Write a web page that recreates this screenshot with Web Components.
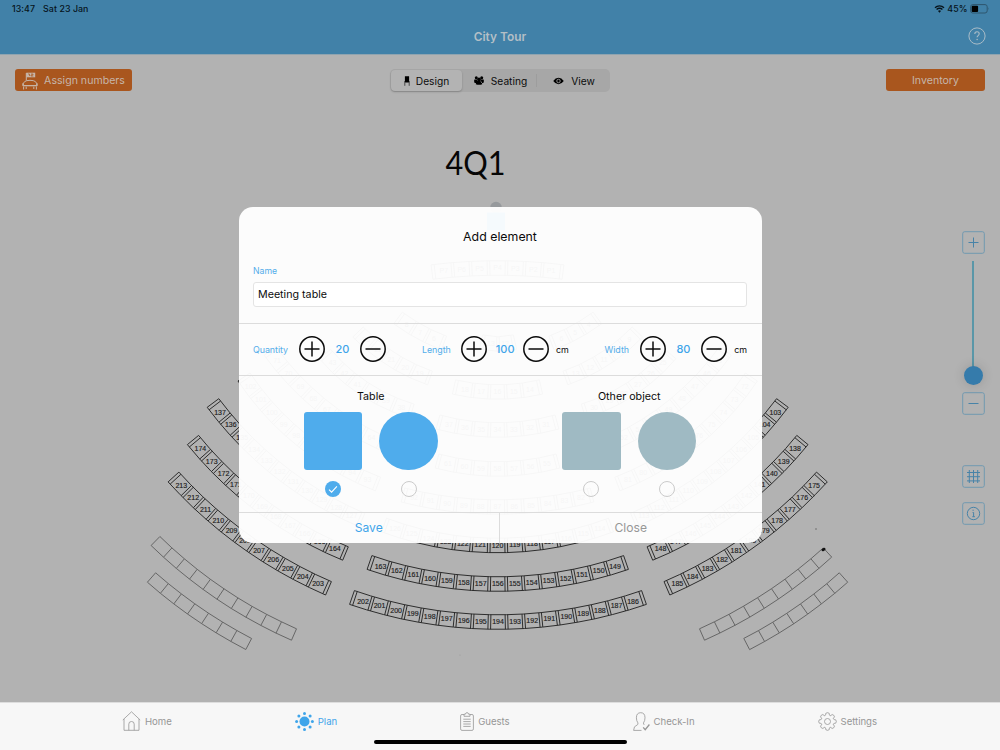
<!DOCTYPE html>
<html lang="en">
<head>
<meta charset="utf-8">
<title>City Tour</title>
<style>
    html, body { margin: 0; height: 100%; overflow: hidden; }
    body { font-family: Inter, "Liberation Sans", sans-serif; background: #b2b2b2; color: #0b0b0b; }
</style>
</head>
<body>
<tour-app></tour-app>

<script>
// Small helper: every element gets an open shadow root with its own styles
class BaseElement extends HTMLElement {
    constructor() {
        super();
        this.attachShadow({ mode: 'open' });
    }
    connectedCallback() {
        this.shadowRoot.innerHTML = this.render();
    }
}

// 1. Header with the status line
class AppHeader extends BaseElement {
    render() {
        return `
            <style>
                :host { display: block; height: 54.5px; background: #4181a8; border-bottom: 1px solid #8fa4b0; box-sizing: border-box; }
                .status { display: flex; justify-content: space-between; height: 17px; align-items: center; padding: 0 11px 0 12px; font-size: 8.8px; font-weight: 500; color: #06131b; letter-spacing: .08px; }
                .left, .right { display: flex; align-items: center; }
                .left { gap: 8px; }
                .right { gap: 2.5px; }
                .bar { display: grid; grid-template-columns: 1fr auto 1fr; align-items: center; height: 38px; padding: 0 14.5px; }
                h1 { margin: 0; font-size: 11.9px; font-weight: 600; color: #b3bfc6; grid-column: 2; }
                .help { justify-self: end; display: block; }
            </style>
            <div class="status">
                <div class="left"><span>13:47</span><span>Sat 23 Jan</span></div>
                <div class="right">
                    <svg width="11" height="8" viewBox="0 0 10 8" fill="none" stroke="#06131b" stroke-width="1.4">
                        <path d="M.5 2.7a6.4 6.4 0 0 1 9 0M2.1 4.5a4.1 4.1 0 0 1 5.8 0"/>
                        <path d="M5 7.7 3.5 6.1a2.1 2.1 0 0 1 3 0z" fill="#06131b" stroke="none"/>
                    </svg>
                    <span>45%</span>
                    <svg width="19" height="10" viewBox="0 0 19 10">
                        <rect x=".6" y=".6" width="16.6" height="8.4" rx="2.2" fill="none" stroke="#2e566e"/>
                        <rect x="1.7" y="1.7" width="6.4" height="6.2" rx="1" fill="#000"/>
                        <path d="M18 3.3q1 1.4 0 2.8z" fill="#2e566e"/>
                    </svg>
                </div>
            </div>
            <div class="bar">
                <h1>City Tour</h1>
                <svg class="help" width="18" height="18" viewBox="0 0 18 18" fill="none" stroke="#a9bcc7">
                    <circle cx="9" cy="9" r="8.1"/>
                    <path d="M6.8 7.1c0-1.5 1-2.3 2.2-2.3s2.2.8 2.2 2c0 1.7-2.1 1.8-2.1 3.5" stroke-width="1.1"/>
                    <circle cx="9.1" cy="12.5" r=".75" fill="#a9bcc7" stroke="none"/>
                </svg>
            </div>
        `;
    }
}
customElements.define('app-header', AppHeader);

// 2. Orange button
class ActionButton extends BaseElement {
    render() {
        return `
            <style>
                :host { display: block; }
                button { display: flex; align-items: center; justify-content: center; gap: 6px; width: 100%; height: 22px; padding: 1px 7px 0; border: 0; border-radius: 3px; background: #a9561e; color: #c6b5a9; font: 400 10.6px Inter, sans-serif; white-space: nowrap; }
                ::slotted(svg) { flex: none; display: block; }
            </style>
            <button><slot name="icon"></slot><span><slot></slot></span></button>
        `;
    }
}
customElements.define('action-button', ActionButton);

// 3. Segmented control
class SegmentControl extends BaseElement {
    render() {
        return `
            <style>
                :host { display: grid; grid-template-columns: 72px 75px 73px; width: 220px; height: 23px; border-radius: 5px; background: #a7a7a7; font-size: 10.2px; color: #0b0b0b; }
                div { display: flex; align-items: center; justify-content: center; gap: 7px; }
                .active { margin: 1px 0 1px 1px; background: #b3b3b3; border-radius: 4px; box-shadow: 0 1px 2px rgba(0,0,0,.22); gap: 6px; }
                .mid { border-right: 1px solid #9d9d9d; height: 13px; align-self: center; padding-left: 3px; }
                .last { padding-left: 1px; }
            </style>
            <div class="active">
                <svg width="6" height="10" viewBox="0 0 6 10"><path d="M.9.3h4.200v4.900h.5v1.300H.4V5.200h.5z"/><path d="M.8 6.500v3.300M5.200 6.500v3.300" stroke="#000" stroke-width=".6"/></svg>
                <span>Design</span>
            </div>
            <div class="mid">
                <svg width="10" height="9" viewBox="0 0 10 9">
                    <circle cx="2.300" cy="1.800" r="1.500"/><circle cx="7.700" cy="1.800" r="1.500"/>
                    <circle cx="5" cy="3.500" r="1.900"/>
                    <path d="M.4 3.600 3 3.400l.6 2.200L2.400 6.900H.7Q-.3 5.200.4 3.600zM9.600 3.600 7 3.400l-.6 2.200 1.200 1.300h1.700q1-1.700.3-3.300zM1.800 8.300q-.1-2.600 1.700-3.200h3q1.800.6 1.700 3.200Q5 9.300 1.800 8.300z"/>
                </svg>
                <span>Seating</span>
            </div>
            <div class="last">
                <svg width="11" height="8" viewBox="0 0 12 8"><path d="M.3 4Q2.600.5 6 .5T11.700 4Q9.400 7.500 6 7.500T.3 4z"/><circle cx="6" cy="4" r="1.900" fill="none" stroke="#aaa" stroke-width=".9"/></svg>
                <span>View</span>
            </div>
        `;
    }
}
customElements.define('segment-control', SegmentControl);

// 4. Seating plan: rows are arcs through three points, split into seats
const AXIS = 497.7;

const seatRows = [
    // left wing, mirrored to the right; `right` is the label at its outer end
    { pts: [[173.5, 477], [243, 539.5], [328.5, 588.3]], n: 11, from: 213, right: 175 },
    { pts: [[193, 440], [261, 505.5], [345.5, 553.5]], n: 11, from: 174, right: 138 },
    { pts: [[213, 403], [278, 470], [362, 520]], n: 11, from: 137, right: 103 },
    { pts: [[244, 377], [301, 439.5], [378, 484]], n: 10, from: 102, right: 72 },
    { pts: [[270, 351], [319, 403.5], [382, 443]], n: 8, from: 71, right: 45 },
    { pts: [[325, 354], [363, 388], [412, 411]], n: 6, from: 43, right: 25 },
    { pts: [[358, 332], [391, 359], [430, 378]], n: 5, from: 23, right: 9 },
    { pts: [[398, 318], [420, 332], [444, 343]], n: 3, from: 8, right: 4 },
    // centre block
    { pts: [[432, 272], [AXIS, 268], [563, 272]], n: 7, from: 7, prefix: 'P' },
    { pts: [[481, 342], [AXIS, 344], [515, 342]], n: 2, from: 13 },
    { pts: [[454, 387], [AXIS, 392], [541, 387]], n: 5, from: 18 },
    { pts: [[438, 422], [AXIS, 430], [557, 422]], n: 7, from: 37 },
    { pts: [[437, 461], [AXIS, 469], [558, 461]], n: 7, from: 61 },
    { pts: [[403, 495], [AXIS, 507], [592, 495]], n: 11, from: 92 },
    { pts: [[384, 525], [AXIS, 545.5], [611, 525]], n: 13, from: 126 },
    { pts: [[369.5, 562.5], [AXIS, 584], [626, 562.5]], n: 15, from: 163 },
    { pts: [[352, 597.5], [AXIS, 622], [644, 597.5]], n: 17, from: 202 }
];

const emptyRows = [
    { pts: [[155.5, 541], [220.5, 594], [294, 634.5]], n: 10 },
    { pts: [[151.5, 577.5], [198.5, 614], [248.7, 644]], n: 7 },
    { pts: [[702, 634.5], [768, 598.5], [827.5, 552.5]], n: 9 },
    { pts: [[746.7, 644], [797, 614], [843.5, 577.5]], n: 7 }
];

function arcThrough([a, b, c]) {
    const d = 2 * (a[0] * (b[1] - c[1]) + b[0] * (c[1] - a[1]) + c[0] * (a[1] - b[1]));
    const sq = p => p[0] * p[0] + p[1] * p[1];
    const x = (sq(a) * (b[1] - c[1]) + sq(b) * (c[1] - a[1]) + sq(c) * (a[1] - b[1])) / d;
    const y = (sq(a) * (c[0] - b[0]) + sq(b) * (a[0] - c[0]) + sq(c) * (b[0] - a[0])) / d;
    const start = Math.atan2(a[1] - y, a[0] - x);
    let sweep = Math.atan2(c[1] - y, c[0] - x) - start;
    if (sweep > Math.PI) sweep -= 2 * Math.PI;
    if (sweep < -Math.PI) sweep += 2 * Math.PI;
    const r = Math.hypot(a[0] - x, a[1] - y);
    return (t, off) => {
        const angle = start + sweep * t;
        return [x + (r + off) * Math.cos(angle), y + (r + off) * Math.sin(angle)];
    };
}

const fmt = p => p.map(v => v.toFixed(1)).join(' ');

function drawRow(row, width, labels) {
    const at = arcThrough(row.pts);
    const h = width / 2;
    const len = Math.hypot(row.pts[2][0] - row.pts[0][0], row.pts[2][1] - row.pts[0][1]);
    const gap = labels ? 1.3 / len : 0;
    const pad = labels ? 3 / len : 0;
    let d = '';
    [-h, h].forEach(off => {
        for (let i = 0; i <= row.n; i++) d += (i ? 'L' : 'M') + fmt(at(i / row.n, off));
    });
    const cut = t => { d += 'M' + fmt(at(t, -h)) + 'L' + fmt(at(t, h)); };
    cut(0);
    cut(1);
    const seat = (1 - 2 * pad) / row.n;
    for (let i = 0; i <= row.n; i++) {
        const t = pad + i * seat;
        if (i === 0 || i === row.n) { if (labels) cut(t); }
        else if (labels) { cut(t - gap); cut(t + gap); }
        else cut(t);
    }
    let out = `<path d="${d}"/>`;
    if (labels) {
        labels.forEach((label, i) => {
            const [x, y] = at(pad + (i + .5) * seat, 0);
            out += `<text x="${x.toFixed(1)}" y="${(y + 2.4).toFixed(1)}">${label}</text>`;
        });
    }
    return out;
}

class SeatingPlan extends BaseElement {
    render() {
        let seats = '';
        seatRows.forEach(row => {
            const labels = Array.from({ length: row.n }, (_, i) => (row.prefix || '') + (row.from - i));
            seats += drawRow(row, 14.5, labels);
            if (row.right) {
                const pts = row.pts.map(p => [2 * AXIS - p[0], p[1]]);
                seats += drawRow({ pts, n: row.n }, 14.5, labels.map((_, i) => row.right + i));
            }
        });
        const empty = emptyRows.map(row => drawRow(row, 12.5)).join('');
        return `
            <style>
                :host { display: block; }
                svg { display: block; }
                .seats path { fill: none; stroke: #262626; stroke-width: .95; }
                .seats text { font: 7px "Liberation Sans", sans-serif; fill: #1c1c1c; stroke: #1c1c1c; stroke-width: .15; text-anchor: middle; }
                .empty path { fill: none; stroke: #5e5e5e; stroke-width: .9; }
                .title { font: 32.5px Lato, sans-serif; fill: #060606; }
            </style>
            <svg width="1000" height="750" viewBox="0 0 1000 750">
                <text class="title" x="445.500" y="174.500" textLength="60" lengthAdjust="spacingAndGlyphs">4Q1</text>
                <circle cx="496" cy="207.500" r="5.800" fill="#96999c"/>
                <rect x="487" y="212.500" width="18" height="18" fill="#0f86cc"/>
                <g class="seats">${seats}</g>
                <g class="empty">${empty}</g>
                <ellipse cx="823.500" cy="549.500" rx="2.200" ry="1.400" fill="#111" transform="rotate(-30 823.500 549.500)"/>
                <circle cx="816" cy="529" r=".8" fill="#666"/>
                <circle cx="460" cy="655" r=".6" fill="#999"/>
            </svg>
        `;
    }
}
customElements.define('seating-plan', SeatingPlan);

// 5. Zoom slider and canvas tools
class CanvasTools extends BaseElement {
    render() {
        return `
            <style>
                :host { display: flex; flex-direction: column; align-items: center; width: 23px; }
                .box { display: block; }
                .track { width: 2px; height: 123px; margin: 7px 0 8px; background: #5a97a8; position: relative; }
                .knob { position: absolute; left: -8.5px; top: 104.5px; width: 19px; height: 19px; border-radius: 50%; background: #357bab; box-shadow: 0 0 12px rgba(0,0,0,.16); }
                .grid { margin-top: 50px; }
                .info { margin-top: 13.5px; }
                rect { stroke: #7099b0; stroke-width: 1; fill: none; }
                svg { fill: none; stroke: #4783a8; }
            </style>
            <svg class="box" width="23" height="23" viewBox="0 0 23 23"><rect x=".7" y=".7" width="21.600" height="21.600" rx="2"/><path d="M6.500 11.500h10M11.500 6.500v10"/></svg>
            <div class="track"><div class="knob"></div></div>
            <svg class="box" width="23" height="23" viewBox="0 0 23 23"><rect x=".7" y=".7" width="21.600" height="21.600" rx="2"/><path d="M6.500 11.500h10"/></svg>
            <svg class="box grid" width="23" height="23" viewBox="0 0 23 23"><rect x=".7" y=".7" width="21.600" height="21.600" rx="2"/><path d="M5 7.500h13M5 11.700h13M5 15.900h13M7.300 5v13M11.500 5v13M15.700 5v13"/></svg>
            <svg class="box info" width="23" height="23" viewBox="0 0 23 23"><rect x=".7" y=".7" width="21.600" height="21.600" rx="2"/><circle cx="11.500" cy="11.500" r="6.200"/><path d="M10.600 10.500h1v4.200M10.300 14.700h2.600M11.100 7.700v1.200"/></svg>
        `;
    }
}
customElements.define('canvas-tools', CanvasTools);

// 6. Plus / minus field
class NumberStepper extends BaseElement {
    render() {
        const unit = this.getAttribute('unit');
        return `
            <style>
                :host { display: flex; align-items: center; }
                label { font-size: 8.9px; color: #54adea; margin-right: 10.7px; letter-spacing: -.05px; }
                svg { display: block; fill: none; stroke: #0b0b0b; stroke-width: 1.5; }
                .value { width: 35.5px; text-align: center; color: #3fa5ea; font-size: 11px; font-weight: 500; }
                .unit { font-size: 8.9px; margin-left: 7px; }
            </style>
            <label>${this.getAttribute('label')}</label>
            <svg width="26" height="26" viewBox="0 0 26 26"><circle cx="13" cy="13" r="12.200"/><path d="M5.500 13h15M13 5.500v15"/></svg>
            <span class="value"><slot></slot></span>
            <svg width="26" height="26" viewBox="0 0 26 26"><circle cx="13" cy="13" r="12.200"/><path d="M5.500 13h15"/></svg>
            ${unit ? `<span class="unit">${unit}</span>` : ''}
        `;
    }
}
customElements.define('number-stepper', NumberStepper);

// 7. Shape with its radio button
class ShapeOption extends BaseElement {
    render() {
        return `
            <style>
                :host { display: flex; flex-direction: column; align-items: center; gap: 11px; }
                .shape { width: 58.3px; height: 58.3px; border-radius: 3px; background: var(--shape, #4facec); }
                :host([round]) .shape { border-radius: 50%; }
                .radio { box-sizing: border-box; width: 16px; height: 16px; border: 1px solid #cbcbcb; border-radius: 50%; }
                :host([checked]) .radio { border: 0; background: #4facec; }
                svg { display: none; }
                :host([checked]) svg { display: block; }
            </style>
            <div class="shape"></div>
            <div class="radio"><svg width="16" height="16" viewBox="0 0 16 16" fill="none" stroke="#fff" stroke-width="1.100"><path d="M4 8.600l2.600 2.500 5.300-5.800"/></svg></div>
        `;
    }
}
customElements.define('shape-option', ShapeOption);

// 8. Dialog
class AddDialog extends BaseElement {
    render() {
        return `
            <style>
                :host { display: flex; flex-direction: column; box-sizing: border-box; width: 523px; height: 336.4px; border-radius: 14px; overflow: hidden; background: rgba(255,255,255,.96); }
                h2 { margin: 0; height: 59px; line-height: 59px; text-align: center; font-size: 12.35px; font-weight: 400; }
                .name { padding: 0 14.5px; height: 57px; border-bottom: 1px solid #dcdcdc; }
                .name label { display: block; font-size: 8.7px; line-height: 10px; color: #54adea; margin-bottom: 6px; }
                input { display: block; box-sizing: border-box; width: 494px; height: 25px; border: 1px solid #e4e4e4; border-radius: 3px; padding: 1px 4px 0; background: #fff; font: 10.7px Inter, sans-serif; color: #0b0b0b; outline: none; }
                .numbers { display: flex; align-items: center; justify-content: space-between; height: 51px; padding: 0 14.5px; border-bottom: 1px solid #dcdcdc; }
                .shapes { display: grid; grid-template-columns: 1fr 1fr; flex: 1; padding: 0 3px; }
                h3 { margin: 0; padding-top: 12px; height: 24.1px; line-height: 17px; text-align: center; font-size: 10.7px; font-weight: 400; }
                .pair { display: flex; justify-content: center; gap: 17.4px; }
                .other { --shape: #9fbac3; }
                footer { display: grid; grid-template-columns: 1fr 1fr; height: 30px; border-top: 1px solid #dcdcdc; text-align: center; font-size: 12.1px; line-height: 30px; }
                .save { color: #3fa5ea; border-right: 1px solid #dcdcdc; }
                .close { color: #979797; }
            </style>
            <h2>Add element</h2>
            <div class="name"><label>Name</label><input value="Meeting table"></div>
            <div class="numbers">
                <number-stepper label="Quantity">20</number-stepper>
                <number-stepper label="Length" unit="cm">100</number-stepper>
                <number-stepper label="Width" unit="cm">80</number-stepper>
            </div>
            <div class="shapes">
                <div><h3>Table</h3><div class="pair"><shape-option checked></shape-option><shape-option round></shape-option></div></div>
                <div class="other"><h3>Other object</h3><div class="pair"><shape-option></shape-option><shape-option round></shape-option></div></div>
            </div>
            <footer><div class="save">Save</div><div class="close">Close</div></footer>
        `;
    }
}
customElements.define('add-dialog', AddDialog);

// 9. Tab bar
class TabItem extends BaseElement {
    render() {
        return `
            <style>
                :host { display: flex; align-items: center; gap: 4px; color: #969696; font-size: 9.6px; letter-spacing: -.04px; }
                :host([active]) { color: #3fa5ea; }
                ::slotted(svg) { display: block; fill: none; stroke: currentColor; stroke-width: .8; }
            </style>
            <slot name="icon"></slot><span><slot></slot></span>
        `;
    }
}
customElements.define('tab-item', TabItem);

class TabBar extends BaseElement {
    render() {
        let dots = '';
        for (let i = 0; i < 8; i++) {
            const a = i * Math.PI / 4;
            dots += `<circle cx="${(9.5 + 7.9 * Math.cos(a)).toFixed(1)}" cy="${(9.5 + 7.9 * Math.sin(a)).toFixed(1)}" r="1.500"/>`;
        }
        // gear outline: eight rounded teeth round the hub
        let gear = '';
        for (let i = 0; i < 8; i++) {
            const p = (o, r) => {
                const a = i * Math.PI / 4 + o;
                return (9.5 + r * Math.cos(a)).toFixed(1) + ' ' + (9.5 + r * Math.sin(a)).toFixed(1);
            };
            gear += (i ? 'Q' + p(-.39, 6) + ' ' : 'M') + p(-.28, 6.8) + 'L' + p(-.2, 8.4) + 'Q' + p(0, 9.5) + ' ' + p(.2, 8.4) + 'L' + p(.28, 6.8);
        }
        return `
            <style>
                :host { display: block; box-sizing: border-box; height: 48px; background: #f7f7f7; border-top: 1px solid #dedede; }
                nav { display: flex; justify-content: space-between; align-items: center; height: 36px; padding: 0 123px 0 122px; }
                .home { width: 253px; height: 4px; margin: 1px auto 0; border-radius: 2px; background: #000; }
            </style>
            <nav>
                <tab-item><svg slot="icon" width="19" height="20" viewBox="0 0 19 20"><path d="M.8 9 9.500.8 18.200 9M2 8v11.300h15V8M6.800 19.300v-6.200q0-2.600 2.700-2.600t2.700 2.600v6.200"/></svg>Home</tab-item>
                <tab-item active><svg slot="icon" width="19" height="19" viewBox="0 0 19 19"><g fill="currentColor" stroke="none"><circle cx="9.500" cy="9.500" r="5"/>${dots}</g></svg>Plan</tab-item>
                <tab-item><svg slot="icon" width="14" height="19" viewBox="0 0 14 19"><path d="M4 2.500H2q-1.400 0-1.400 1.400v13q0 1.500 1.400 1.500h10q1.400 0 1.400-1.500v-13q0-1.400-1.400-1.400h-2M4 4.300V2.200h1.400Q5.600.6 7 .6t1.600 1.600H10v2.100zM3.300 7.200h7.400M3.300 9.600h7.400M3.300 12h7.400M3.300 14.400h7.400"/></svg>Guests</tab-item>
                <tab-item><svg slot="icon" width="17" height="19" viewBox="0 0 17 19"><path d="M8.500 18.400H.6q0-4.400 3.500-5.400 1.200-.4.800-2.100Q3.400 8.800 3.400 5.800 3.400.7 7.700.7T12 5.800q0 3-1.500 5.100-.2 1.300.8 2"/><path d="M10.200 15.400l2 2.300 4.200-5.200" stroke-width="1.300"/></svg>Check-In</tab-item>
                <tab-item><svg slot="icon" width="19" height="19" viewBox="0 0 19 19"><path d="${gear}Q15 7.200 15.800 7.400" stroke-linejoin="round"/><circle cx="9.500" cy="9.500" r="3"/></svg>Settings</tab-item>
            </nav>
            <div class="home"></div>
        `;
    }
}
customElements.define('tab-bar', TabBar);

// 10. Page
class TourApp extends BaseElement {
    render() {
        return `
            <style>
                :host { display: flex; flex-direction: column; height: 750px; width: 1000px; position: relative; background: #b2b2b2; overflow: hidden; }
                seating-plan { position: absolute; inset: 0; }
                app-header, tab-bar, .toolbar { position: relative; }
                .toolbar { display: grid; grid-template-columns: 1fr auto 1fr; align-items: start; padding: 14.5px 15px 0; }
                .assign { width: 117px; }
                .inventory { width: 99px; justify-self: end; }
                main { flex: 1; }
                canvas-tools { position: absolute; right: 15.5px; top: 231.4px; }
                add-dialog { position: absolute; left: 238.5px; top: 206.8px; }
            </style>
            <seating-plan></seating-plan>
            <app-header></app-header>
            <div class="toolbar">
                <action-button class="assign">
                    <svg slot="icon" width="16" height="18" viewBox="0 0 16 18" fill="none" stroke="#c6b5a9">
                        <path d="M4.300 8.500V1M1.600 17.500v-3M14.400 17.500v-3M4.200 17v-2.300M11.800 17v-2.300"/>
                        <path d="M4.300.7h8.900v4.600H4.300z" fill="#c6b5a9" stroke="none"/>
                        <path d="M6 2h1.500v2M9 2h2v1H9v1h2.300" stroke="#a9561e" stroke-width=".7"/>
                        <path d="M1.300 13.500Q.6 8.300 8 8.300t6.700 5.200zM.8 11.300v2.500h14.400v-2.500"/>
                    </svg>
                    Assign numbers
                </action-button>
                <segment-control></segment-control>
                <action-button class="inventory">Inventory</action-button>
            </div>
            <main></main>
            <canvas-tools></canvas-tools>
            <tab-bar></tab-bar>
            <add-dialog></add-dialog>
        `;
    }
}
customElements.define('tour-app', TourApp);
</script>
</body>
</html>
